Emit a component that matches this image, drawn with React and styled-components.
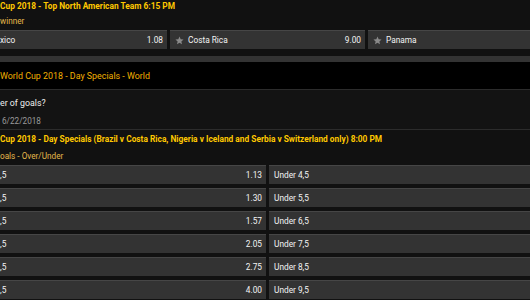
import React from "react";
import styled, { createGlobalStyle } from "styled-components";

const GlobalStyle = createGlobalStyle`
  html, body { margin: 0; padding: 0; background: #111111; }
  body { font-family: Roboto, "Liberation Sans", Arial, sans-serif; overflow: hidden; }
`;

const Page = styled.div`
  width: 530px;
  height: 300px;
  overflow: hidden;
  background: #111111;
  display: flex;
  flex-direction: column;
`;

const MarketBlock = styled.div`
  display: flex;
  flex-direction: column;
`;

const MarketTitle = styled.div`
  color: #ffc800;
  font-weight: 700;
  font-size: 8.35px;
  line-height: 12px;
  height: 12px;
  white-space: nowrap;
`;

const MarketSub = styled.div`
  color: #e4b84c;
  font-size: 8.2px;
  line-height: 12px;
  margin-top: ${(p) => p.$top || 3}px;
  white-space: nowrap;
`;

const ButtonRow = styled.div`
  display: flex;
  gap: 3px;
  margin-top: 3px;
`;

const OddsButton = styled.div`
  box-sizing: border-box;
  height: 19px;
  width: ${(p) => (p.$w ? `${p.$w}px` : "auto")};
  flex: ${(p) => (p.$w ? "none" : "1")};
  background: #333333;
  border-top: 1px solid #464646;
  display: flex;
  align-items: center;
  padding: 0 ${(p) => p.$pr ?? 4}px 0 ${(p) => p.$pl ?? 0}px;
  color: #f4f4f4;
  font-size: 8.3px;
  white-space: nowrap;
`;

const Label = styled.span`
  flex: 1;
`;

const Price = styled.span`
  color: #f4f4f4;
`;

const Star = styled.svg`
  width: 9px;
  height: 9px;
  margin-right: 4px;
  flex: none;
`;

const GreyBand = styled.div`
  height: 6px;
  margin-top: 7px;
  background: #333333;
`;

const CompetitionHeader = styled.div`
  height: 27px;
  background: #000000;
  border-bottom: 1px solid #2c2c2c;
  display: flex;
  align-items: center;
  color: #f2b000;
  font-size: 8.9px;
  white-space: nowrap;
`;

const Question = styled.div`
  height: 40px;
  box-sizing: border-box;
  background: #131313;
  border-bottom: 1px solid #2c2c2c;
  display: flex;
  flex-direction: column;
  padding-top: 7px;
`;

const QuestionText = styled.div`
  color: #eeeeee;
  font-size: 8.8px;
  line-height: 12px;
`;

const QuestionDate = styled.div`
  color: #9a9a9a;
  font-size: 8.2px;
  line-height: 12px;
  margin-top: 6px;
  padding-left: 2px;
`;

const Market2 = styled.div`
  display: flex;
  flex-direction: column;
  padding-top: 3px;
`;

const Grid = styled.div`
  display: grid;
  grid-template-columns: 266px 1fr;
  column-gap: 3px;
  row-gap: 4px;
  margin-top: 3px;
`;

const StarIcon = () => (
  <Star viewBox="0 0 24 24">
    <path
      fill="#8a8a8a"
      d="M12 1.5l3.1 7.1 7.7.7-5.8 5.1 1.7 7.6L12 18l-6.7 4 1.7-7.6-5.8-5.1 7.7-.7z"
    />
  </Star>
);

const rows = [
  ["1.13", "Under 4,5"],
  ["1.30", "Under 5,5"],
  ["1.57", "Under 6,5"],
  ["2.05", "Under 7,5"],
  ["2.75", "Under 8,5"],
  ["4.00", "Under 9,5"],
];

export default function App() {
  return (
    <>
      <GlobalStyle />
      <Page>
        <MarketBlock>
          <MarketTitle>Cup 2018 - Top North American Team 6:15 PM</MarketTitle>
          <MarketSub>winner</MarketSub>
          <ButtonRow>
            <OddsButton $w={167}>
              <Label>xico</Label>
              <Price>1.08</Price>
            </OddsButton>
            <OddsButton $w={195} $pl={5}>
              <StarIcon />
              <Label>Costa Rica</Label>
              <Price>9.00</Price>
            </OddsButton>
            <OddsButton $pl={5}>
              <StarIcon />
              <Label>Panama</Label>
            </OddsButton>
          </ButtonRow>
        </MarketBlock>
        <GreyBand />
        <CompetitionHeader>World Cup 2018 - Day Specials - World</CompetitionHeader>
        <Question>
          <QuestionText>er of goals?</QuestionText>
          <QuestionDate>6/22/2018</QuestionDate>
        </Question>
        <Market2>
          <MarketTitle>
            Cup 2018 - Day Specials (Brazil v Costa Rica, Nigeria v Iceland and Serbia v Switzerland only) 8:00 PM
          </MarketTitle>
          <MarketSub $top={5}>oals - Over/Under</MarketSub>
          <Grid>
            {rows.map(([price, under]) => (
              <React.Fragment key={under}>
                <OddsButton>
                  <Label>,5</Label>
                  <Price>{price}</Price>
                </OddsButton>
                <OddsButton $pl={5}>
                  <Label>{under}</Label>
                </OddsButton>
              </React.Fragment>
            ))}
          </Grid>
        </Market2>
      </Page>
    </>
  );
}
